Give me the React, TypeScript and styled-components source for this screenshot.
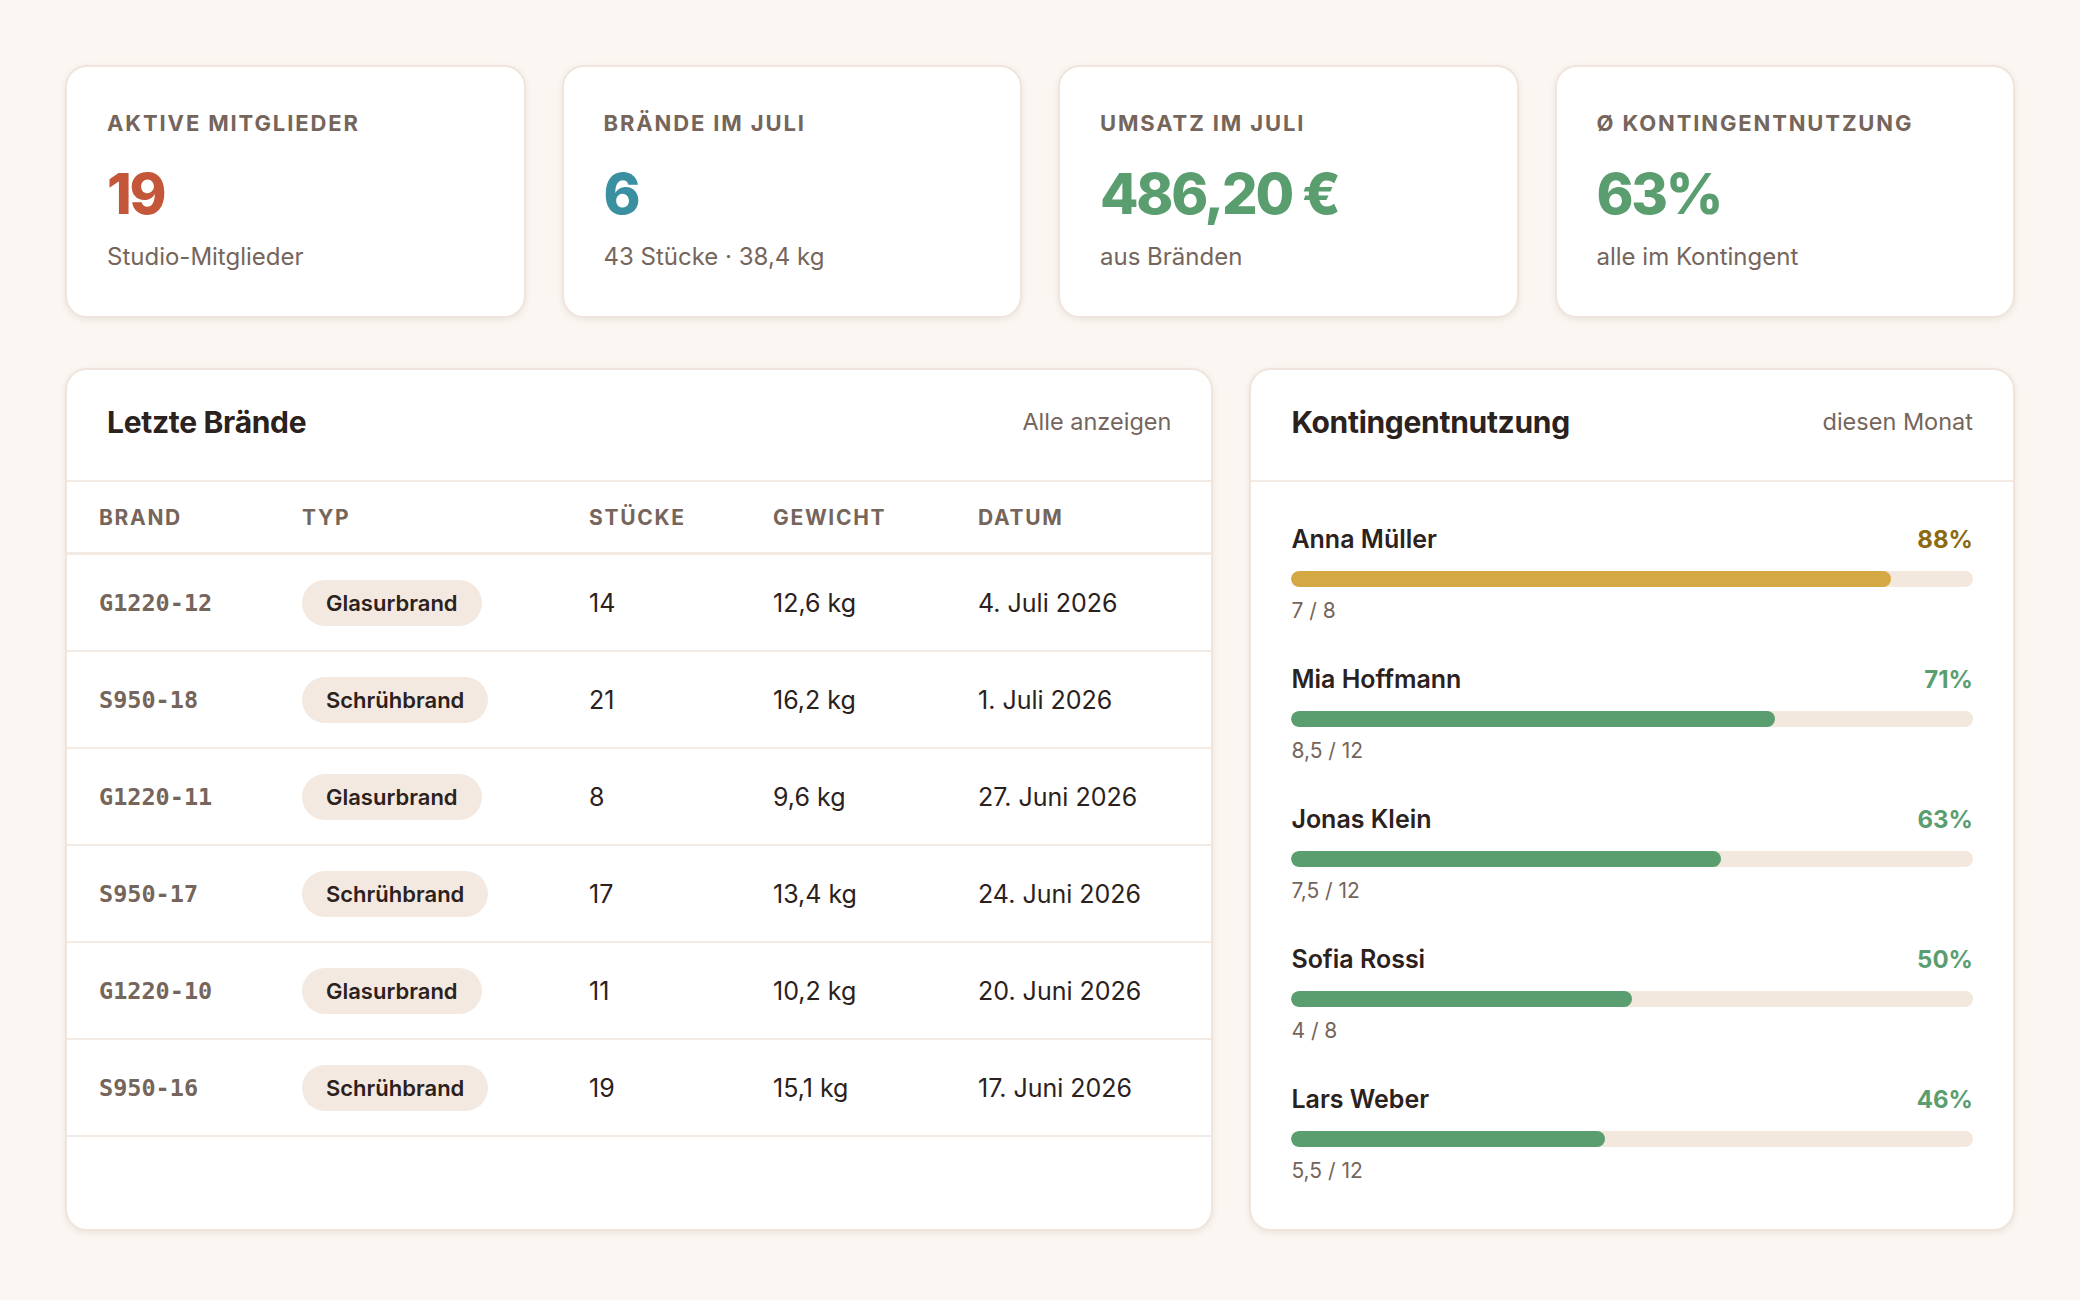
import React from "react";
import styled, { createGlobalStyle } from "styled-components";

const GlobalStyle = createGlobalStyle`
  html, body {
    margin: 0;
    padding: 0;
    background: #faf6f1;
  }
  body {
    font-family: Inter, "Noto Sans", "Liberation Sans", sans-serif;
    color: #2b211d;
    -webkit-font-smoothing: antialiased;
  }
  * { box-sizing: border-box; }
`;

const Page = styled.main`
  padding: 65px;
  display: flex;
  flex-direction: column;
  gap: 50px;
`;

const StatGrid = styled.section`
  display: grid;
  grid-template-columns: repeat(4, 1fr);
  gap: 36px;
`;

const Card = styled.div`
  background: #ffffff;
  border: 2px solid #f0e4dc;
  border-radius: 22px;
  box-shadow: 0 2px 6px rgba(110, 80, 55, 0.1);
`;

const StatCard = styled(Card)`
  padding: 44px 40px 44px;
  display: flex;
  flex-direction: column;
`;

const StatLabel = styled.div`
  font-size: 22px;
  line-height: 25px;
  font-weight: 700;
  letter-spacing: 0.085em;
  text-transform: uppercase;
  color: #75655b;
`;

const StatValue = styled.div<{ $tone: string }>`
  margin-top: 29px;
  font-size: 56px;
  line-height: 58px;
  font-weight: 800;
  letter-spacing: -0.04em;
  color: ${(p) => p.$tone};
`;

const StatSub = styled.div`
  margin-top: 19px;
  font-size: 24px;
  line-height: 30px;
  color: #75655b;
`;

const Lower = styled.section`
  display: grid;
  grid-template-columns: 3fr 2fr;
  gap: 36px;
  align-items: stretch;
`;

const Panel = styled(Card)`
  display: flex;
  flex-direction: column;
  overflow: hidden;
`;

const PanelHead = styled.header`
  height: 112px;
  padding: 0 40px 6px;
  display: flex;
  align-items: center;
  justify-content: space-between;
  border-bottom: 2px solid #f3ebe3;
`;

const PanelTitle = styled.h2`
  margin: 0;
  font-size: 30px;
  line-height: 36px;
  font-weight: 700;
  letter-spacing: -0.01em;
  color: #2b211d;
`;

const PanelAside = styled.span`
  font-size: 23.5px;
  line-height: 30px;
  color: #75655b;
`;

const TableRow = styled.div<{ $head?: boolean }>`
  display: grid;
  grid-template-columns: 203px 287px 184px 205px 1fr;
  align-items: center;
  padding: 0 32px;
  height: ${(p) => (p.$head ? "73px" : "97px")};
  border-bottom: ${(p) => (p.$head ? "3px" : "2px")} solid #f3ebe3;
`;

const HeadCell = styled.div`
  font-size: 21px;
  font-weight: 700;
  letter-spacing: 0.08em;
  text-transform: uppercase;
  color: #75655b;
`;

const Cell = styled.div`
  font-size: 25px;
  color: #2b211d;
`;

const Code = styled.div`
  font-family: "DejaVu Sans Mono", "Liberation Mono", monospace;
  font-size: 23.5px;
  font-weight: 700;
  color: #75655b;
`;

const Pill = styled.span`
  display: inline-flex;
  align-items: center;
  height: 46px;
  padding: 0 24px;
  border-radius: 23px;
  background: #f3e9e0;
  font-size: 22px;
  font-weight: 600;
  color: #2b211d;
`;

const QuotaList = styled.div`
  padding: 43px 40px 46px;
  display: flex;
  flex-direction: column;
  gap: 42px;
`;

const QuotaItem = styled.div`
  display: flex;
  flex-direction: column;
`;

const QuotaTop = styled.div`
  display: flex;
  justify-content: space-between;
  align-items: baseline;
`;

const QuotaName = styled.span`
  font-size: 25px;
  line-height: 29px;
  font-weight: 600;
  color: #2b211d;
`;

const QuotaPct = styled.span<{ $tone: string }>`
  font-size: 24px;
  line-height: 29px;
  font-weight: 700;
  color: ${(p) => p.$tone};
`;

const Track = styled.div`
  margin-top: 17px;
  height: 16px;
  border-radius: 8px;
  background: #f2e8dd;
  overflow: hidden;
`;

const Fill = styled.div<{ $tone: string }>`
  height: 100%;
  border-radius: 8px;
  background: ${(p) => p.$tone};
`;

const QuotaSub = styled.span`
  margin-top: 11px;
  font-size: 21px;
  line-height: 25px;
  color: #75655b;
`;

const stats = [
  { label: "Aktive Mitglieder", value: "19", tone: "#c4573a", sub: "Studio-Mitglieder" },
  { label: "Brände im Juli", value: "6", tone: "#3a8fa0", sub: "43 Stücke · 38,4 kg" },
  { label: "Umsatz im Juli", value: "486,20 €", tone: "#5a9e6f", sub: "aus Bränden" },
  { label: "Ø Kontingentnutzung", value: "63%", tone: "#5a9e6f", sub: "alle im Kontingent" },
];

const firings = [
  { code: "G1220-12", type: "Glasurbrand", pieces: "14", weight: "12,6 kg", date: "4. Juli 2026" },
  { code: "S950-18", type: "Schrühbrand", pieces: "21", weight: "16,2 kg", date: "1. Juli 2026" },
  { code: "G1220-11", type: "Glasurbrand", pieces: "8", weight: "9,6 kg", date: "27. Juni 2026" },
  { code: "S950-17", type: "Schrühbrand", pieces: "17", weight: "13,4 kg", date: "24. Juni 2026" },
  { code: "G1220-10", type: "Glasurbrand", pieces: "11", weight: "10,2 kg", date: "20. Juni 2026" },
  { code: "S950-16", type: "Schrühbrand", pieces: "19", weight: "15,1 kg", date: "17. Juni 2026" },
];

const quotas = [
  { name: "Anna Müller", used: "7", total: "8", pct: 88 },
  { name: "Mia Hoffmann", used: "8,5", total: "12", pct: 71 },
  { name: "Jonas Klein", used: "7,5", total: "12", pct: 63 },
  { name: "Sofia Rossi", used: "4", total: "8", pct: 50 },
  { name: "Lars Weber", used: "5,5", total: "12", pct: 46 },
];

const barTone = (pct: number) => (pct >= 80 ? "#d4a843" : "#5a9e6f");
const textTone = (pct: number) => (pct >= 80 ? "#8b6a10" : "#5a9e6f");

export default function App() {
  return (
    <>
      <GlobalStyle />
      <Page>
        <StatGrid>
          {stats.map((s) => (
            <StatCard key={s.label}>
              <StatLabel>{s.label}</StatLabel>
              <StatValue $tone={s.tone}>{s.value}</StatValue>
              <StatSub>{s.sub}</StatSub>
            </StatCard>
          ))}
        </StatGrid>

        <Lower>
          <Panel>
            <PanelHead>
              <PanelTitle>Letzte Brände</PanelTitle>
              <PanelAside>Alle anzeigen</PanelAside>
            </PanelHead>
            <TableRow $head>
              <HeadCell>Brand</HeadCell>
              <HeadCell>Typ</HeadCell>
              <HeadCell>Stücke</HeadCell>
              <HeadCell>Gewicht</HeadCell>
              <HeadCell>Datum</HeadCell>
            </TableRow>
            {firings.map((f) => (
              <TableRow key={f.code}>
                <Code>{f.code}</Code>
                <div>
                  <Pill>{f.type}</Pill>
                </div>
                <Cell>{f.pieces}</Cell>
                <Cell>{f.weight}</Cell>
                <Cell>{f.date}</Cell>
              </TableRow>
            ))}
          </Panel>

          <Panel>
            <PanelHead>
              <PanelTitle>Kontingentnutzung</PanelTitle>
              <PanelAside>diesen Monat</PanelAside>
            </PanelHead>
            <QuotaList>
              {quotas.map((q) => (
                <QuotaItem key={q.name}>
                  <QuotaTop>
                    <QuotaName>{q.name}</QuotaName>
                    <QuotaPct $tone={textTone(q.pct)}>{q.pct}%</QuotaPct>
                  </QuotaTop>
                  <Track>
                    <Fill $tone={barTone(q.pct)} style={{ width: `${q.pct}%` }} />
                  </Track>
                  <QuotaSub>
                    {q.used} / {q.total}
                  </QuotaSub>
                </QuotaItem>
              ))}
            </QuotaList>
          </Panel>
        </Lower>
      </Page>
    </>
  );
}
